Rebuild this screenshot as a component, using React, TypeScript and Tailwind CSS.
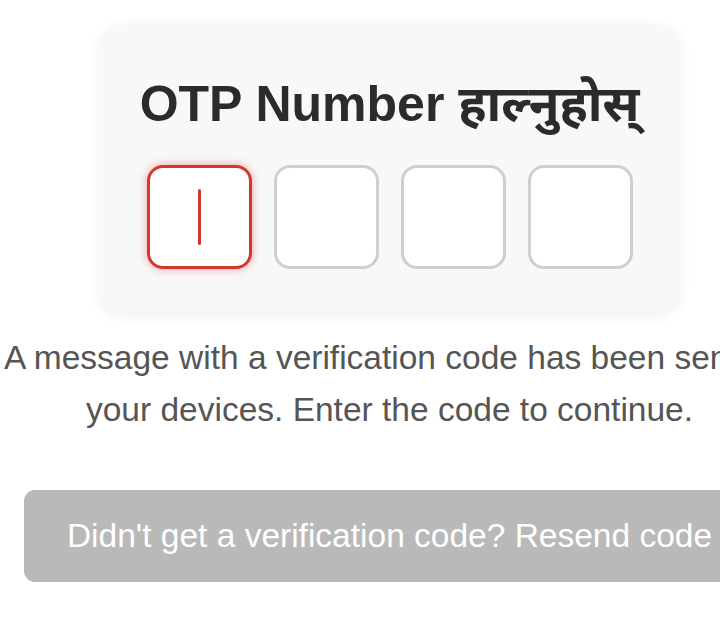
import React from 'react';

// otp input boxes
const OtpBoxes: React.FC = () => {
	const boxes = [0, 1, 2, 3];

	return (
		<div className="mt-[36px] flex gap-[22px]">
			{boxes.map((i) =>
				i === 0 ? (
					<div
						key={i}
						className="flex h-[104px] w-[105px] items-center justify-center rounded-[16px] border-[3px] border-[#d2392c] bg-white shadow-[0_0_9px_rgba(210,57,44,0.45)]"
					>
						<span className="h-[56px] w-[3px] rounded-full bg-[#d2392c]" />
					</div>
				) : (
					<div
						key={i}
						className="h-[104px] w-[105px] rounded-[16px] border-[3px] border-[#cfcfcf] bg-white"
					/>
				)
			)}
		</div>
	);
};

// otp page
const App: React.FC = () => {
	return (
		<div className="h-[618px] w-[720px] overflow-hidden bg-white font-['Liberation_Sans','Noto_Sans_Devanagari','Noto_Sans',sans-serif]">
			<div className="flex w-[779px] flex-col items-center pt-[25px]">
				{/* card */}
				<div className="flex h-[288px] w-[579px] flex-col items-center rounded-[22px] bg-[#f8f8f8] pt-[54px] shadow-[0_2px_14px_rgba(0,0,0,0.07)]">
					<h1 className="text-[50px] font-bold leading-[50px] whitespace-nowrap text-[#2b2b2b]">
						OTP Number हाल्नुहोस्
					</h1>
					<OtpBoxes />
				</div>

				{/* message */}
				<p className="mt-[19px] text-center text-[33.5px] leading-[52px] text-[#555555]">
					A message with a verification code has been sent to your devices. Enter the code to continue.
				</p>

				{/* resend */}
				<button className="mt-[54px] flex h-[92px] w-[731px] items-center justify-center rounded-[11px] bg-[#b9b9b9] text-[33.5px] whitespace-nowrap text-white">
					Didn't get a verification code? Resend code
				</button>
			</div>
		</div>
	);
};

export default App;
